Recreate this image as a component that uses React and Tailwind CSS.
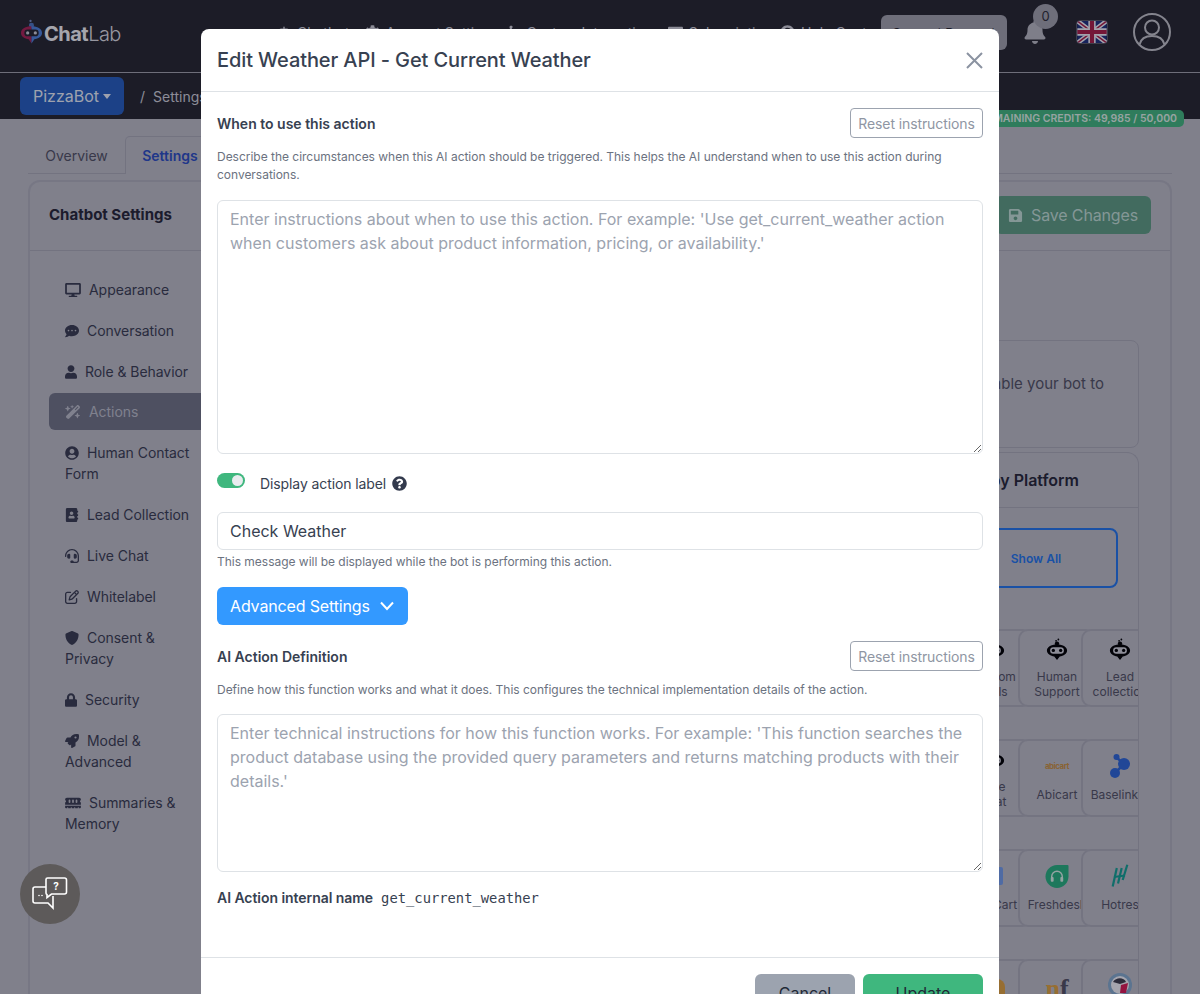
import React from "react";
import { FaDesktop, FaCommentDots, FaUser, FaUserCircle, FaAddressBook, FaHeadset, FaLock, FaRocket, FaSave, FaBell, FaQuestionCircle, FaRobot, FaCog, FaPuzzlePiece, FaCreditCard } from "react-icons/fa";
import { FaWandMagicSparkles, FaMemory, FaShield, FaRegPenToSquare } from "react-icons/fa6";

const sidebar = [
  [FaDesktop, "w-[16px]", "Appearance"],
  [FaCommentDots, "w-[14px]", "Conversation"],
  [FaUser, "w-[12px]", "Role & Behavior"],
  [FaWandMagicSparkles, "w-[16px]", "Actions", true],
  [FaUserCircle, "w-[14px]", "Human Contact Form"],
  [FaAddressBook, "w-[14px]", "Lead Collection"],
  [FaHeadset, "w-[14px]", "Live Chat"],
  [FaRegPenToSquare, "w-[14px]", "Whitelabel"],
  [FaShield, "w-[14px]", "Consent & Privacy"],
  [FaLock, "w-[12px]", "Security"],
  [FaRocket, "w-[14px]", "Model & Advanced"],
  [FaMemory, "w-[16px]", "Summaries & Memory"],
];

function Robot() {
  return (
    <svg width="22" height="24" viewBox="0 0 24 26" className="block">
      <circle cx="13.500" cy="1.500" r="1" fill="#000" />
      <circle cx="11" cy="3" r="1" fill="#000" />
      <circle cx="12" cy="6" r="2.400" fill="#000" />
      <path d="M12 7C5 7 1 10 1 13.500C1 17 5 19.500 9 20L12 24L15 20C19 19.500 23 17 23 13.500C23 10 19 7 12 7Z" fill="#000" />
      <rect x="4.500" y="10" width="15" height="7" rx="3.500" fill="#c5c5cc" />
      <circle cx="8" cy="13.500" r="1.800" fill="#000" />
      <circle cx="16" cy="13.500" r="1.800" fill="#000" />
    </svg>
  );
}

function Logo() {
  return (
    <svg width="23" height="26" viewBox="0 0 24 26" className="block shrink-0">
      <circle cx="11" cy="1.500" r="1.200" fill="#6f86b8" />
      <circle cx="12" cy="6" r="2.600" fill="#4a6fb5" />
      <path d="M12 7C6 7 1 9.500 1 14C1 18 5 20 9 20.500L12 25V7Z" fill="#a12150" />
      <path d="M12 7C18 7 23 9.500 23 14C23 18 19 20 15 20.500L12 25V7Z" fill="#4a7bd0" />
      <rect x="4.500" y="10.500" width="15" height="7" rx="3.500" fill="#23232b" />
      <circle cx="8" cy="14" r="1.700" fill="#c5c5cc" />
      <circle cx="16" cy="14" r="1.700" fill="#c5c5cc" />
    </svg>
  );
}

function Flag() {
  return (
    <svg width="32" height="24" viewBox="0 0 32 24" className="block rounded-[4px] border border-[#55555f]">
      <rect width="32" height="24" fill="#1d2f78" />
      <path d="M0 0L32 24M32 0L0 24" stroke="#e5e5ea" strokeWidth="5" />
      <path d="M0 0L32 24M32 0L0 24" stroke="#a31d43" strokeWidth="1.600" />
      <path d="M16 0V24M0 12H32" stroke="#e5e5ea" strokeWidth="8" />
      <path d="M16 0V24M0 12H32" stroke="#a31d43" strokeWidth="4.500" />
    </svg>
  );
}

function Profile() {
  return (
    <svg width="38" height="38" viewBox="0 0 38 38" fill="none" stroke="#b9b9be" strokeWidth="2" className="block">
      <circle cx="19" cy="19" r="18" />
      <circle cx="19" cy="14.500" r="7" />
      <path d="M6.500 31.500C8 25 13 23 19 23C25 23 30 25 31.500 31.500" />
    </svg>
  );
}

function ChatBubbles() {
  return (
    <svg width="36" height="34" viewBox="0 0 36 34" fill="none" stroke="#fff" strokeWidth="1.600" className="block">
      <path d="M14 2.500C14 1.500 14.800 1 15.600 1H32.500C33.800 1 34.500 1.800 34.500 3V15C34.500 16.500 33.800 17 32.500 17H19.500L15 20.500V17.500C14.300 17.300 14 16.800 14 16V2.500Z" />
      <path d="M14 10H3C1.800 10 1 10.800 1 12V24C1 25.500 1.800 26 3 26H16L21 31V19" />
      <text x="24" y="12.500" fontSize="10" fontWeight="700" fill="#fff" stroke="none" textAnchor="middle" fontFamily="Inter, sans-serif">?</text>
      <circle cx="7" cy="18.500" r=".8" fill="#fff" stroke="none" />
      <circle cx="10" cy="18.500" r=".8" fill="#fff" stroke="none" />
    </svg>
  );
}

function Cell({ icon, children }) {
  return (
    <div className="relative mr-[-15px] flex h-[78px] w-[78px] shrink-0 flex-col items-center overflow-hidden rounded-[10px] border-2 border-[#a3a3ad] bg-[#b3b3bb] pt-[1px] text-center text-[12px] leading-[15px] text-[#4e4e5d]">
      <div className="flex h-[36px] shrink-0 items-center justify-center">{icon}</div>
      <div className="mt-[1px] flex h-[30px] shrink-0 items-center whitespace-pre-line">{children}</div>
    </div>
  );
}

function Row({ cells, last }) {
  return (
    <div className={`ml-[719px] flex overflow-hidden ${last ? "" : "mb-[32px]"}`}>
      {cells}
    </div>
  );
}

function Reset() {
  return (
    <button className="h-[30px] w-[133px] rounded-[4px] border border-[#9ca3af] bg-white text-[14px] tracking-[-0.1px] text-[#8f96a3]">
      Reset instructions
    </button>
  );
}

export default function App() {
  return (
    <div className="relative h-[994px] w-[1200px] overflow-hidden bg-[#b3b3bb] font-['Inter',sans-serif]">
      {/* Top navigation */}
      <header className="flex h-[73px] items-center border-b border-[#9a9aa3] bg-[#24242c] pb-[8px] pl-[20px]">
        <div className="flex w-[100px] shrink-0 items-center gap-[1px]">
          <Logo />
          <span className="mt-[3px] text-[20px] font-bold leading-none tracking-[-0.5px] text-[#e8e8ea]">Chat<span className="font-light tracking-[-0.6px] text-[#d5d5d9]">Lab</span></span>
        </div>
        <nav className="ml-[157px] flex w-[604px] shrink-0 items-center gap-[8px] whitespace-nowrap text-[14px] text-[#c5c5cc]">
          <span className="flex items-center gap-[6px]"><FaRobot className="text-[14px]" />Chatbots</span>
          <span className="flex items-center gap-[6px]"><FaCog className="text-[15px]" />Account Settings</span>
          <span className="flex items-center gap-[6px]"><FaPuzzlePiece className="text-[14px]" />Custom Integrations</span>
          <span className="flex items-center gap-[6px]"><FaCreditCard className="text-[15px]" />Subscription</span>
          <span className="flex items-center gap-[6px]"><FaQuestionCircle className="text-[15px]" />Help Center</span>
        </nav>
        <button className="h-[35px] w-[126px] shrink-0 rounded-[6px] bg-[#9a9aa3] pt-[3px] text-[13px] text-[#24242c]">Support Request</button>
        <div className="relative ml-[16px] shrink-0">
          <FaBell className="text-[24px] text-[#b0b0b8]" />
          <span className="absolute left-[10px] top-[-16px] flex h-[25px] w-[25px] items-center justify-center rounded-full bg-[#9a9aa3] text-[13px] text-[#2c2c34]">0</span>
        </div>
        <div className="ml-[29px] shrink-0"><Flag /></div>
        <div className="ml-[25px] shrink-0"><Profile /></div>
      </header>

      {/* Sub bar */}
      <div className="flex h-[46px] items-center bg-[#24242c] pl-[20px] text-[14px] text-[#c5c5cc]">
        <button className="flex h-[38px] w-[104px] items-center justify-center gap-[4px] rounded-[6px] bg-[#245ab5] text-[16px] text-[#dfe3ec]">
          PizzaBot
          <span className="mt-[1px] h-0 w-0 border-x-[4.500px] border-t-[5px] border-x-transparent border-t-[#dfe3ec]" />
        </button>
        <span className="ml-[16px]">/</span>
        <span className="ml-[8px]">Settings</span>
      </div>
      <div className="absolute left-[984px] top-[110px] flex h-[17px] w-[200px] items-center justify-end whitespace-nowrap rounded-[5px] bg-[#3fae77] pr-[7px] text-[10.500px] font-semibold text-[#d5e5dc]">
        REMAINING CREDITS: 49,985 / 50,000
      </div>

      {/* Main content */}
      <main className="px-[28px] pt-[17px]">
        <div className="flex h-[38px] border-b border-[#a1a1ab]">
          <button className="h-[37px] w-[97px] pt-[1px] text-[14px] text-[#4e4e5d]">Overview</button>
          <button className="h-[38px] w-[90px] rounded-t-[5px] border border-b-0 border-[#a1a1ab] bg-[#b3b3bb] text-[14px] font-semibold text-[#2a4bb8]">Settings</button>
        </div>
        <section className="mt-[6px] rounded-t-[12px] border-2 border-b-0 border-[#a7a7b1]">
          <div className="flex h-[69px] items-center justify-between border-b border-[#a1a1ab] pb-[2px] pl-[19px] pr-[19px]">
            <h2 className="text-[15px] font-bold text-[#242433]">Chatbot Settings</h2>
            <button className="flex h-[38px] items-center gap-[8px] rounded-[6px] bg-[#5b957c] pl-[13px] pr-[13px] text-[16px] tracking-[-0.15px] text-[#b9d4ca]">
              <FaSave className="text-[15px]" />
              Save Changes
            </button>
          </div>
          <div className="flex">
            <aside className="w-[190px] shrink-0 pl-[19px] pt-[20px]">
              {sidebar.map(([Icon, w, label, active]) => (
                <div key={label} className={`mb-[4px] w-[170px] rounded-[6px] px-[16px] py-[8px] text-[14px] leading-[21px] tracking-[-0.05px] ${active ? "mt-[-1px] bg-[#6c6f7f] text-[#b3b5bf]" : "text-[#373a4c]"}`}>
                  <Icon className={`mr-[8px] inline-block h-[14px] align-[-2px] ${w}`} />
                  {label}
                </div>
              ))}
            </aside>
            <div className="ml-[15px] flex w-[904px] flex-col pt-[89px]">
              <div className="flex h-[108px] justify-end rounded-[8px] border border-[#a1a1ab] pr-[34px] pt-[32px] text-[15px] text-[#4e4e5d]">
                Actions enable your bot to
              </div>
              <div className="mt-[4px] rounded-t-[12px] border border-b-0 border-[#a1a1ab]">
                <div className="flex h-[55px] items-center justify-end border-b border-[#a1a1ab] pr-[59px] text-[16px] font-semibold text-[#242433]">
                  Actions by Platform
                </div>
                <div className="flex justify-end pr-[20px] pt-[20px]">
                  <button className="h-[60px] w-[164px] rounded-[8px] border-2 border-[#2170e0] pt-[1px] text-[12px] font-semibold text-[#2170e0]">Show All</button>
                </div>
                <div className="pt-[41px]">
                  <Row cells={<>
                    <Cell icon={<Robot />}>{"Custom\ntools"}</Cell>
                    <Cell icon={<Robot />}>{"Human\nSupport"}</Cell>
                    <Cell icon={<Robot />}>{"Lead\ncollection"}</Cell>
                  </>} />
                  <Row cells={<>
                    <Cell icon={<Robot />}>{"Live\nchat"}</Cell>
                    <Cell icon={<span className="mt-[12px] text-[8px] font-bold tracking-[-0.5px] text-[#c08a3e]">abicart</span>}>Abicart</Cell>
                    <Cell icon={
                      <svg width="20" height="25" viewBox="0 0 20 25" className="mt-[12px] block"><path d="M6 3L14 10L5 19" stroke="#2c62cc" strokeWidth="2.500" fill="none" /><circle cx="6.500" cy="3" r="3" fill="#2c62cc" /><circle cx="14" cy="10" r="6" fill="#2c62cc" /><circle cx="5" cy="19" r="5" fill="#2c62cc" /></svg>
                    }>Baselinker</Cell>
                  </>} />
                  <Row cells={<>
                    <Cell icon={<div className="mt-[12px] h-[18px] w-[18px] rounded-[2px] bg-[#6d96df]" />}>CS-Cart</Cell>
                    <Cell icon={
                      <svg width="24" height="23" viewBox="0 0 24 24" className="mt-[12px] block"><path d="M12 0H23C23.600 0 24 .4 24 1V12C24 18.600 18.600 24 12 24C5.400 24 0 18.600 0 12C0 5.400 5.400 0 12 0Z" fill="#26a878" /><path d="M6.500 14V12A5.500 5.500 0 0 1 17.500 12V14" stroke="#cfe5dc" strokeWidth="1.500" fill="none" /><rect x="5.500" y="12.500" width="3" height="5" rx="1" fill="#cfe5dc" /><rect x="15.500" y="12.500" width="3" height="5" rx="1" fill="#cfe5dc" /></svg>
                    }>Freshdesk</Cell>
                    <Cell icon={
                      <svg width="18" height="24" viewBox="0 0 18 24" className="mt-[12px] block" fill="none" stroke="#139a8c" strokeWidth="2.200"><path d="M1.700 22.500L5.800 4" /><path d="M7 19.500L10.700 4" /><path d="M11.700 16L16.300 .7" /><path d="M3 13L14 11.500" /></svg>
                    }>Hotres</Cell>
                  </>} />
                  <Row last cells={<>
                    <Cell icon={<div className="mt-[28px] h-[30px] w-[22px] rounded-[8px] bg-[#d59a3b]" />}>Cell</Cell>
                    <Cell icon={<span className="mt-[18px] font-['Liberation_Serif',serif] text-[26px] font-bold leading-none text-[#d59a3b]">n<span className="text-[#4e4e5d]">f</span></span>}>Ninja</Cell>
                    <Cell icon={
                      <svg width="24" height="24" viewBox="0 0 24 24" className="mt-[10px] block"><circle cx="12" cy="12" r="12" fill="#7fa2c2" /><circle cx="12" cy="12" r="9" fill="#e8e8ec" /><path d="M5 9C8 4 16 4 18 9L12 11Z" fill="#3c3c48" /><path d="M13 12L20 10L18 20L12 20Z" fill="#d0184f" /></svg>
                    }>PrestaShop</Cell>
                  </>} />
                </div>
              </div>
            </div>
          </div>
        </section>
      </main>

      {/* Backdrop */}
      <div className="absolute inset-0 bg-[rgba(10,10,30,0.3)]" />

      {/* Chat launcher */}
      <button className="absolute left-[20px] top-[864px] flex h-[60px] w-[60px] items-center justify-center rounded-full bg-[#5d5a5a]">
        <ChatBubbles />
      </button>

      {/* Modal */}
      <div className="absolute inset-x-0 top-[29px] flex justify-center">
        <div className="w-[798px] rounded-t-[8px] bg-white text-[#374151]">
          <div className="flex h-[63px] items-center justify-between border-b border-[#dee2e6] px-[16px]">
            <h1 className="text-[20px] font-medium tracking-[-0.1px] text-[#374151]">Edit Weather API - Get Current Weather</h1>
            <svg width="20" height="20" viewBox="0 0 20 20" stroke="#8b93a1" strokeWidth="2" className="mr-[-1px] block"><path d="M3 3L18 18M18 3L3 18" /></svg>
          </div>

          <div className="h-[865px] px-[16px] pt-[16px]">
            <div className="flex items-start justify-between">
              <h3 className="mt-[6px] text-[14px] font-semibold leading-[20px] text-[#374151]">When to use this action</h3>
              <Reset />
            </div>
            <p className="mt-[10px] text-[12px] leading-[18px] tracking-[-0.02px] text-[#6b7280]">
              Describe the circumstances when this AI action should be triggered. This helps the AI understand when to use this action during conversations.
            </p>
            <textarea
              className="mt-[16px] block h-[254px] w-full rounded-[6px] border border-[#dee2e6] px-[12px] py-[6px] text-[16px] leading-[24px] placeholder:text-[#9ca3af] focus:outline-none"
              placeholder="Enter instructions about when to use this action. For example: 'Use get_current_weather action when customers ask about product information, pricing, or availability.'"
            />

            <div className="mt-[20px] flex h-[18px] items-center">
              <div className="mb-[5px] flex h-[15px] w-[28px] items-center justify-end rounded-full bg-[#3fb77e] pr-[2px]">
                <div className="h-[11px] w-[11px] rounded-full bg-[#e9ecef]" />
              </div>
              <span className="ml-[15px] text-[14px] tracking-[-0.1px] text-[#374151]">Display action label</span>
              <FaQuestionCircle className="ml-[6px] text-[15px] text-[#333a4d]" />
            </div>

            <input
              readOnly
              value="Check Weather"
              className="mt-[20px] block h-[38px] w-full rounded-[6px] border border-[#dee2e6] px-[12px] text-[16px] text-[#374151] focus:outline-none"
            />
            <p className="mt-[3px] text-[12px] leading-[18px] tracking-[-0.02px] text-[#6b7280]">This message will be displayed while the bot is performing this action.</p>

            <button className="mt-[16px] flex h-[38px] w-[191px] items-center gap-[9px] rounded-[6px] bg-[#3399ff] pl-[13px] text-[16px] tracking-[-0.15px] text-white">
              Advanced Settings
              <svg width="16" height="10" viewBox="0 0 16 10" fill="none" stroke="#fff" strokeWidth="2" className="block"><path d="M2 1.500L8 8L14 1.500" /></svg>
            </button>

            <div className="mt-[16px] flex items-start justify-between">
              <h3 className="mt-[6px] text-[14px] font-semibold leading-[20px] text-[#374151]">AI Action Definition</h3>
              <Reset />
            </div>
            <p className="mt-[10px] text-[12px] leading-[18px] tracking-[-0.02px] text-[#6b7280]">
              Define how this function works and what it does. This configures the technical implementation details of the action.
            </p>
            <textarea
              className="mt-[15px] block h-[158px] w-full rounded-[6px] border border-[#dee2e6] px-[12px] py-[6px] text-[16px] leading-[24px] placeholder:text-[#9ca3af] focus:outline-none"
              placeholder="Enter technical instructions for how this function works. For example: 'This function searches the product database using the provided query parameters and returns matching products with their details.'"
            />
            <div className="mt-[16px] flex items-center text-[14px] leading-[20px]">
              <span className="font-semibold tracking-[-0.05px] text-[#374151]">AI Action internal name</span>
              <code className="ml-[8px] font-['DejaVu_Sans_Mono',monospace] text-[13.800px] text-[#374151]">get_current_weather</code>
            </div>
          </div>

          <div className="flex justify-end gap-[8px] border-t border-[#dee2e6] px-[16px] py-[16px]">
            <button className="h-[38px] w-[100px] rounded-[6px] bg-[#9ca3af] text-[16px] text-[#1f2937]">Cancel</button>
            <button className="h-[38px] w-[120px] rounded-[6px] bg-[#3fb77e] text-[16px] text-[#1f2937]">Update</button>
          </div>
        </div>
      </div>
    </div>
  );
}
